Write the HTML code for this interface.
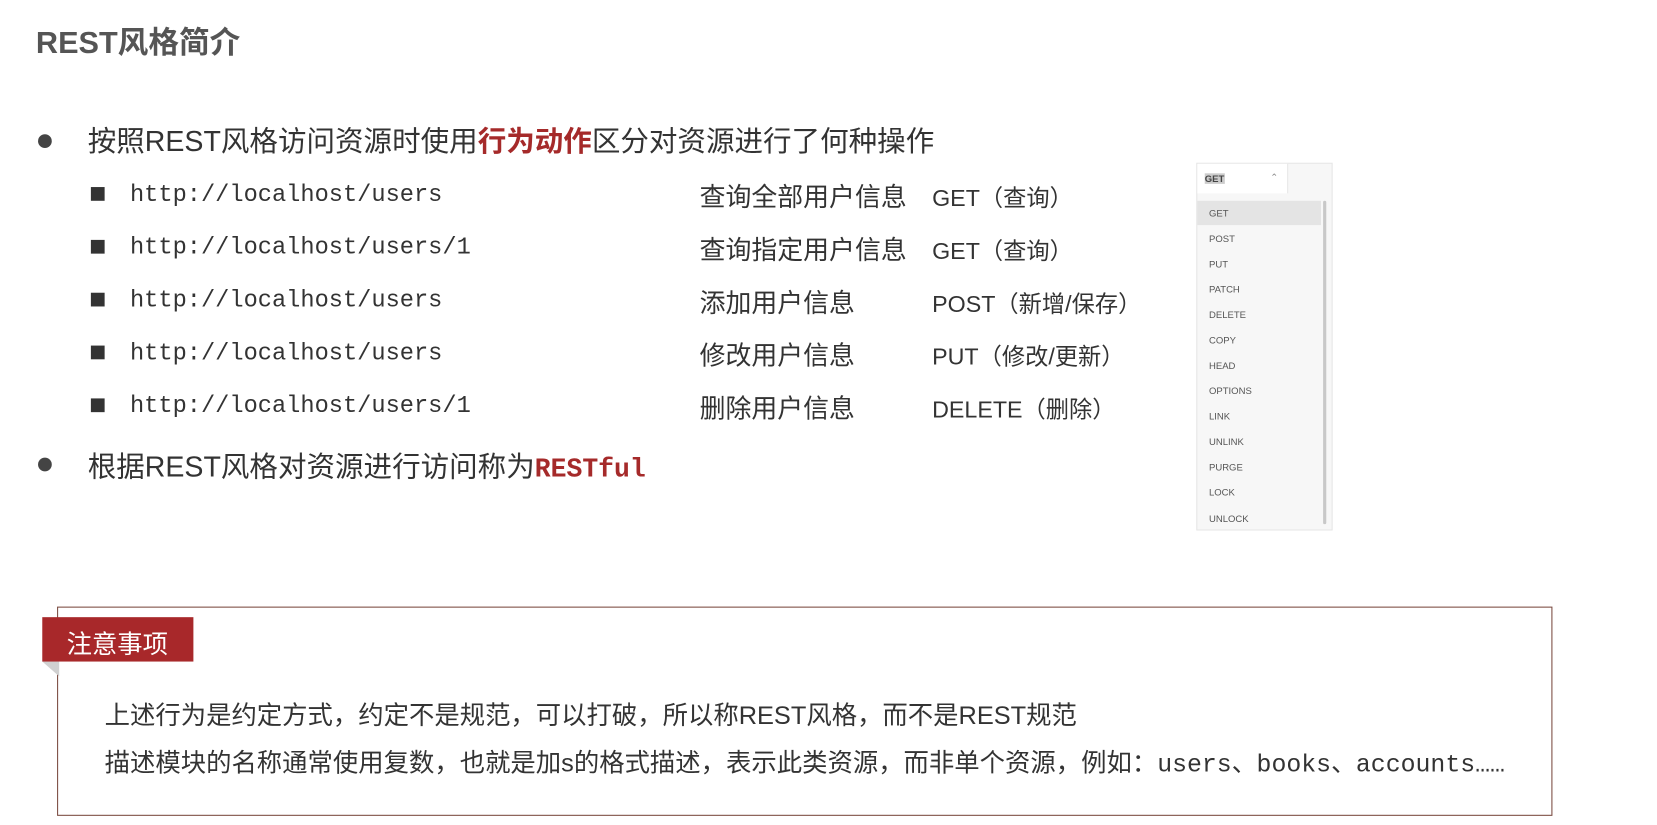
<!DOCTYPE html>
<html><head><meta charset="utf-8"><style>
body{margin:0;width:1657px;height:825px;background:#fff;position:relative;overflow:hidden;font-family:"Liberation Sans","Noto Sans CJK SC",sans-serif;color:#333}
#w{position:absolute;left:0;top:0;width:1568px;height:781px;transform:scale(1.0568);transform-origin:0 0}
.a{position:absolute;white-space:nowrap}
.t{left:34px;top:17px;font-size:29px;font-weight:bold;color:#555}
.b{font-size:27px;color:#333}
.dot{width:13px;height:13px;border-radius:50%;background:#444}
.sq{width:13px;height:13px;background:#333}
.m{font-family:"Liberation Mono",monospace;font-size:22.4px;color:#333}
.c{font-size:24.5px;color:#333}
.g{font-size:22px;color:#333}
.red{color:#a52a2a;font-weight:bold}
.dd{font-size:9px;color:#555;left:1144px}
</style></head><body><div id="w">
<div class="a t">REST风格简介</div>

<div class="a dot" style="left:36px;top:127px"></div>
<div class="a b" style="left:83px;top:112px">按照REST风格访问资源时使用<span class="red">行为动作</span>区分对资源进行了何种操作</div>

<div class="a sq" style="left:86px;top:177px"></div>
<div class="a m" style="left:123px;top:171px">http://localhost/users</div>
<div class="a c" style="left:662px;top:168px">查询全部用户信息</div>
<div class="a g" style="left:882px;top:170px">GET（查询）</div>

<div class="a sq" style="left:86px;top:227px"></div>
<div class="a m" style="left:123px;top:221px">http://localhost/users/1</div>
<div class="a c" style="left:662px;top:218px">查询指定用户信息</div>
<div class="a g" style="left:882px;top:220px">GET（查询）</div>

<div class="a sq" style="left:86px;top:277px"></div>
<div class="a m" style="left:123px;top:271px">http://localhost/users</div>
<div class="a c" style="left:662px;top:268px">添加用户信息</div>
<div class="a g" style="left:882px;top:270px">POST（新增/保存）</div>

<div class="a sq" style="left:86px;top:327px"></div>
<div class="a m" style="left:123px;top:321px">http://localhost/users</div>
<div class="a c" style="left:662px;top:318px">修改用户信息</div>
<div class="a g" style="left:882px;top:320px">PUT（修改/更新）</div>

<div class="a sq" style="left:86px;top:377px"></div>
<div class="a m" style="left:123px;top:371px">http://localhost/users/1</div>
<div class="a c" style="left:662px;top:368px">删除用户信息</div>
<div class="a g" style="left:882px;top:370px">DELETE（删除）</div>

<div class="a dot" style="left:36px;top:433px"></div>
<div class="a b" style="left:83px;top:420px">根据REST风格对资源进行访问称为<span class="red" style="font-family:'Liberation Mono',monospace;font-size:25px">RESTful</span></div>

<!-- dropdown -->
<div class="a" style="left:1132px;top:154px;width:127px;height:346px;background:#f7f7f7;border:1px solid #e6e6e6"></div>
<div class="a" style="left:1133px;top:155px;width:85px;height:28px;background:#fff;border-right:1px solid #e6e6e6"></div>
<div class="a" style="left:1140px;top:164px;font-size:9px;background:#ccc;color:#444;font-weight:bold">GET</div>
<div class="a" style="left:1202px;top:163px;font-size:9px;color:#888">⌃</div>
<div class="a" style="left:1133px;top:190px;width:117px;height:23px;background:#e4e4e4"></div>
<div class="a" style="left:1252px;top:190px;width:3px;height:306px;background:#c8c8c8;border-radius:2px"></div>
<div class="a dd" style="top:197px">GET</div>
<div class="a dd" style="top:221px">POST</div>
<div class="a dd" style="top:245px">PUT</div>
<div class="a dd" style="top:269px">PATCH</div>
<div class="a dd" style="top:293px">DELETE</div>
<div class="a dd" style="top:317px">COPY</div>
<div class="a dd" style="top:341px">HEAD</div>
<div class="a dd" style="top:365px">OPTIONS</div>
<div class="a dd" style="top:389px">LINK</div>
<div class="a dd" style="top:413px">UNLINK</div>
<div class="a dd" style="top:437px">PURGE</div>
<div class="a dd" style="top:461px">LOCK</div>
<div class="a dd" style="top:486px">UNLOCK</div>

<!-- note box -->
<div class="a" style="left:54px;top:574px;width:1413px;height:196px;border:1px solid #7a4a40"></div>
<div class="a" style="left:40px;top:626px;width:0;height:0;border-top:14px solid #d0d0d0;border-left:16px solid transparent"></div>
<div class="a" style="left:40px;top:584px;width:143px;height:42px;background:#a8282a"></div>
<div class="a" style="left:63px;top:590px;font-size:24px;color:#fff">注意事项</div>
<div class="a" style="left:99px;top:657px;font-size:24px;color:#333">上述行为是约定方式，约定不是规范，可以打破，所以称REST风格，而不是REST规范</div>
<div class="a" style="left:99px;top:702px;font-size:24px;color:#333">描述模块的名称通常使用复数，也就是加s的格式描述，表示此类资源，而非单个资源，例如：<span style="font-family:'Liberation Mono',monospace;font-size:23.5px">users、books、accounts……</span></div>
</div></body></html>
